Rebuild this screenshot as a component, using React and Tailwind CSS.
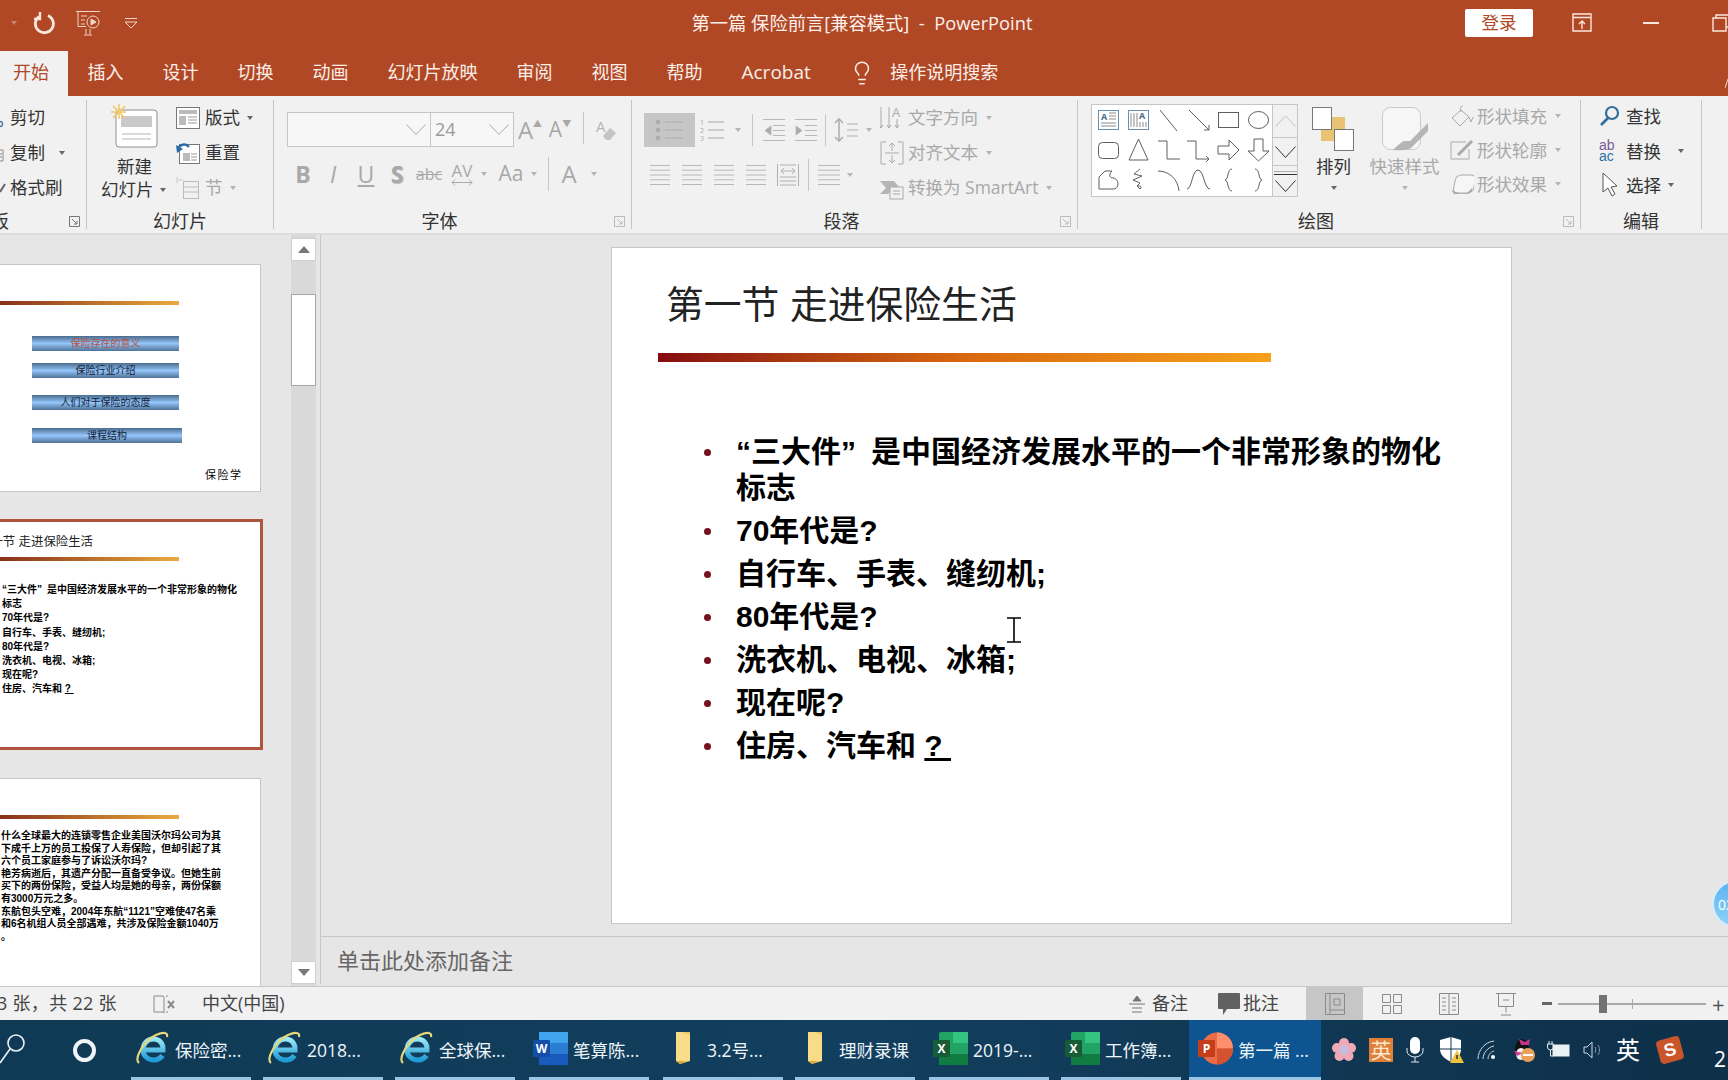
import { Lightbulb } from 'lucide-react';

const CJK = "font-['Open_Sans','Noto_Sans_CJK_SC',sans-serif]";
const SLIDE = "font-['Liberation_Sans','Noto_Sans_CJK_SC',sans-serif]";

const Drop = ({ claro = false, className = '' }) => (
	<span
		className={`inline-block w-0 h-0 border-x-[3.5px] border-x-transparent border-t-[4px] ${claro ? 'border-t-[#b5b5b5]' : 'border-t-[#666]'} ${className}`}
	/>
);

const Sep = ({ className = '' }) => <span className={`w-px bg-[#c6c6c6] shrink-0 ${className}`} />;

const Launcher = ({ claro = false }) => (
	<svg width="11" height="11" viewBox="0 0 11 11" fill="none" stroke={claro ? '#bbb' : '#777'}>
		<path d="M.5 10.5V.5h10v10z" />
		<path d="M3 3l5 5M8 5v3H5" />
	</svg>
);

function Grupo({ titulo, izquierda, lanzador, claro, className = '', children }) {
	return (
		<div className={`flex flex-col shrink-0 my-[4px] border-r border-[#c6c6c6] ${className}`}>
			<div className="h-[110px] shrink-0 flex">{children}</div>
			<div className="h-[22px] shrink-0 grid grid-cols-[1fr_auto_1fr] items-center text-[18px] text-[#333] leading-none">
				<span>{izquierda}</span>
				<span className={lanzador ? '-translate-x-[13px]' : ''}>{titulo}</span>
				<span className="flex justify-end pr-[6px]">{lanzador && <Launcher claro={claro} />}</span>
			</div>
		</div>
	);
}

const Celda = ({ className = '', children }) => (
	<span className={`flex items-center justify-center shrink-0 ${className}`}>{children}</span>
);

const Lineas = ({ filas = 4, ancho = 20, alto = 20, x1 = 0, color = '#b8b8b8' }) => (
	<svg width={ancho} height={alto} fill="none" stroke={color}>
		{Array.from({ length: filas }).map((_, i) => {
			const y = 1.5 + (i * (alto - 3)) / (filas - 1);
			return <path key={i} d={`M${x1} ${y}H${ancho}`} />;
		})}
	</svg>
);

const Chevron = ({ color = '#aaa', w = 20, h = 11, sw = 1 }) => (
	<svg width={w} height={h} viewBox={`0 0 ${w} ${h}`} fill="none" stroke={color} strokeWidth={sw}>
		<path d={`M.5 .5L${w / 2} ${h - 0.5}L${w - 0.5} .5`} />
	</svg>
);

// la comilla de cierre ocupa un caracter completo en la diapositiva
const Cierra = () => <span className="inline-block w-[1em] text-left">”</span>;

function Formas() {
	const s = '#5f5f5f';
	const items = [
		<>
			<rect x="2.5" y="3.5" width="20" height="19" fill="#fff" stroke="#6b8eae" />
			<text x="5" y="13" fontSize="9" fontWeight="700" fill="#44688a">A</text>
			<path d="M13 6h7M13 9h7M13 12h7M5 16h15M5 19h15" stroke="#8a8a8a" />
		</>,
		<>
			<rect x="2.5" y="3.5" width="20" height="19" fill="#fff" stroke="#6b8eae" />
			<text x="13" y="12" fontSize="9" fontWeight="700" fill="#44688a">A</text>
			<path d="M5 6v14M8 6v14M11 6v14M14 15v5M17 15v5M20 15v5" stroke="#8a8a8a" />
		</>,
		<path d="M4 3l17 21" stroke={s} />,
		<path d="M3 3l20 20M23 23v-5M23 23h-5" stroke={s} />,
		<rect x="2.5" y="5.5" width="20" height="15" stroke={s} />,
		<ellipse cx="12.5" cy="13" rx="10" ry="8.5" stroke={s} />,
		<rect x="2.5" y="5.5" width="20" height="16" rx="4" stroke={s} />,
		<path d="M12.5 2L3 23h19z" stroke={s} />,
		<path d="M2 4h9v18h13" stroke={s} />,
		<path d="M1 4h9v18h13M23 22l-3-3M23 22l-3 3" stroke={s} />,
		<path d="M2 9h11V3l10 10-10 10v-6H2z" stroke={s} />,
		<path d="M8 2h9v12h6L12.5 24 2 14h6z" stroke={s} />,
		<path d="M3 22V10l6-6h7c-4 4-2 7 1 7s5 3 5 6-2 5-5 5z" stroke={s} />,
		<path d="M14 2l-6 5 8 2-9 4 7 3-3 3 3 3c2-1 1-4-2-3" stroke={s} />,
		<path d="M2 4c11 0 20 8 21 20" stroke={s} />,
		<path d="M1 22C6 22 6 3 12 3s6 19 12 19" stroke={s} />,
		<path d="M16 2c-5 0-3 10-7 11 4 1 2 11 7 11" stroke={s} />,
		<path d="M9 2c5 0 3 10 7 11-4 1-2 11-7 11" stroke={s} />,
	];
	return (
		<div className="grid grid-cols-[repeat(6,30px)] grid-rows-[repeat(3,30px)] w-[182px] h-[93px] bg-white border border-[#c6c6c6] px-px">
			{items.map((x, i) => (
				<Celda key={i}>
					<svg width="25" height="26" viewBox="0 0 25 26" fill="none">
						{x}
					</svg>
				</Celda>
			))}
		</div>
	);
}

function Cinta() {
	const gris = 'text-[#a8a8a8]';
	return (
		<div className="h-[139px] bg-[#f1f1f1] flex border-b-2 border-[#dcdcdc] shrink-0 text-[#333]">
			{/* Portapapeles: los iconos quedan cortados por el borde de la ventana */}
			<Grupo
				titulo=""
				izquierda={<span className="block -ml-[9px]">板</span>}
				lanzador
				className="w-[87px] overflow-x-clip"
			>
				<div className="flex flex-col w-full text-[17.5px]">
					<div className="h-[35px] flex items-center">
						<svg width="10" height="20" fill="none" stroke="#4d7ea8" strokeWidth="1.4">
							<circle cx="0" cy="16" r="2.5" />
						</svg>
						剪切
					</div>
					<div className="h-[35px] flex items-center">
						<svg width="10" height="20" fill="none" stroke="#8a8a8a">
							<path d="M0 7h3v11H0M0 11h2M0 14h2" />
						</svg>
						复制 <Drop className="ml-[14px]" />
					</div>
					<div className="h-[35px] flex items-center">
						<svg width="10" height="20" fill="none" stroke="#666" strokeWidth="2">
							<path d="M0 14L5 6" />
						</svg>
						格式刷
					</div>
				</div>
			</Grupo>

			{/* Diapositivas */}
			<Grupo titulo="幻灯片" className="w-[187px]">
				<div className="w-[89px] shrink-0 flex flex-col text-[17.5px] leading-[23px]">
					<svg className="ml-[24px] mt-[4px] mb-[7px]" width="48" height="44" viewBox="0 0 48 44" fill="none">
						<rect x="5" y="6" width="41" height="37" rx="3" fill="#fff" stroke="#8d8d8d" />
						<rect x="10" y="12" width="31" height="11" fill="#c9c9c9" />
						<path d="M11 30h29M11 35h29" stroke="#b5b5b5" />
						<path d="M8 0v15M0 8h15M2 2l12 12M14 2L2 14" stroke="#f0c866" strokeWidth="1.6" />
					</svg>
					<span className="ml-[30px]">新建</span>
					<span className="ml-[14px] flex items-center">
						幻灯片 <Drop className="ml-[6px]" />
					</span>
				</div>
				<div className="flex flex-col text-[17.5px]">
					<div className="h-[35px] flex items-center gap-[5px]">
						<svg width="24" height="24" viewBox="0 0 24 24" fill="#fff" stroke="#777">
							<rect x=".5" y="1.5" width="23" height="21" />
							<rect x="3" y="4" width="18" height="4" fill="#bbb" stroke="none" />
							<rect x="3" y="10" width="7" height="9" fill="#bbb" stroke="none" />
							<path d="M12 11h9M12 14h9M12 17h9" stroke="#999" />
						</svg>
						版式 <Drop className="ml-[2px]" />
					</div>
					<div className="h-[35px] flex items-center gap-[5px]">
						<svg width="24" height="24" viewBox="0 0 24 24" fill="#fff" stroke="#777">
							<rect x="3.5" y="3.5" width="20" height="19" />
							<rect x="7" y="12" width="7" height="8" fill="#bbb" stroke="none" />
							<path d="M15 13h6M15 16h6M15 19h6" stroke="#999" />
							<path d="M2 9c1-6 8-7 11-3" fill="none" stroke="#2b6ca8" strokeWidth="2.4" />
							<path d="M0 4l1 8 6-4z" fill="#2b6ca8" stroke="none" />
						</svg>
						重置
					</div>
					<div className={`h-[35px] flex items-center gap-[5px] ${gris}`}>
						<svg width="24" height="24" viewBox="0 0 24 24" fill="none" stroke="#bcbcbc">
							<rect x="7.5" y="5.5" width="15" height="17" />
							<path d="M7 11h16M7 16h16" />
							<path d="M1 1v6M1 4h6" stroke="#ddd" strokeWidth="2" />
						</svg>
						节 <Drop claro className="ml-[2px]" />
					</div>
				</div>
			</Grupo>

			{/* Fuente */}
			<Grupo titulo="字体" lanzador claro className="w-[358px]">
				<div className="flex flex-col pl-[13px]">
					<div className="flex mt-[12px] h-[35px]">
						<div className="w-[144px] bg-[#f7f7f7] border border-[#c6c6c6] flex items-center justify-end pr-[4px]">
							<Chevron />
						</div>
						<div className="w-[83px] bg-[#f7f7f7] border border-[#c6c6c6] border-l-0 flex items-center justify-between pl-[4px] pr-[4px] text-[18px] text-[#9a9a9a]">
							24 <Chevron />
						</div>
						<Celda className={`w-[32px] text-[24px] ${gris}`}>
							A<span className="text-[9px] -mt-[12px]">▲</span>
						</Celda>
						<Celda className={`w-[28px] text-[21px] ${gris}`}>
							A<span className="text-[9px] -mt-[12px]">▼</span>
						</Celda>
						<Sep className="ml-[9px] h-[32px]" />
						<Celda className="w-[44px]">
							<svg width="22" height="24" viewBox="0 0 22 24" fill="none">
								<text x="1" y="14" fontSize="15" fill="#b5b5b5">A</text>
								<path d="M8 18l7-8 6 5-6 7h-4z" fill="#c4c4c4" />
							</svg>
						</Celda>
					</div>
					<div className={`flex items-center mt-[9px] h-[36px] ${gris}`}>
						<Celda className="w-[32px] text-[23px] font-bold">B</Celda>
						<Celda className="w-[28px] text-[23px] italic">I</Celda>
						<Celda className="w-[38px] text-[23px] underline">U</Celda>
						<Celda className="w-[24px] text-[23px] font-bold [text-shadow:1px_1px_1px_#bbb]">S</Celda>
						<Celda className="w-[40px] text-[16px] line-through">abc</Celda>
						<Celda className="w-[26px] flex-col text-[17px] leading-[16px]">
							AV
							<svg width="22" height="7" fill="none" stroke="#a8a8a8">
								<path d="M1 3.5h20M1 3.500l3-3M1 3.500l3 3M21 3.500l-3-3M21 3.500l-3 3" />
							</svg>
						</Celda>
						<Celda className="w-[18px]">
							<Drop claro />
						</Celda>
						<Celda className="w-[36px] text-[21px]">Aa</Celda>
						<Celda className="w-[10px]">
							<Drop claro />
						</Celda>
						<Sep className="ml-[9px] h-[34px]" />
						<Celda className="w-[24px] ml-[8px] text-[24px]">A</Celda>
						<Celda className="w-[26px]">
							<Drop claro />
						</Celda>
					</div>
				</div>
			</Grupo>

			{/* Parrafo */}
			<Grupo titulo="段落" lanzador claro className="w-[446px]">
				<div className="w-[248px] shrink-0 flex flex-col pl-[12px]">
					<div className="flex items-center mt-[13px] h-[34px]">
						<div className="w-[51px] h-[34px] bg-[#c6c6c6] flex items-center justify-center">
							<svg width="30" height="24" fill="#adadad" stroke="#adadad">
								<circle cx="3" cy="4" r="2" />
								<circle cx="3" cy="12" r="2" />
								<circle cx="3" cy="20" r="2" />
								<path d="M10 4h18M10 12h18M10 20h18" />
							</svg>
						</div>
						<svg className="ml-[5px]" width="24" height="24" fill="none" stroke="#aaa">
							<text x="0" y="7" fontSize="7" fill="#aaa" stroke="none">1</text>
							<text x="0" y="15" fontSize="7" fill="#aaa" stroke="none">2</text>
							<text x="0" y="23" fontSize="7" fill="#aaa" stroke="none">3</text>
							<path d="M8 4h16M8 12h16M8 20h16" />
						</svg>
						<Celda className="w-[28px]">
							<Drop claro />
						</Celda>
						<Sep className="h-[32px]" />
						<svg className="ml-[9px]" width="23" height="24" fill="none" stroke="#b8b8b8">
							<path d="M1 1.5h22M11 7.5h12M11 12.5h12M11 17.5h12M1 22.5h22" />
							<path d="M9 8l-6 4.5 6 4.5z" fill="#aaa" />
						</svg>
						<svg className="ml-[9px]" width="23" height="24" fill="none" stroke="#b8b8b8">
							<path d="M1 1.5h22M11 7.5h12M11 12.5h12M11 17.5h12M1 22.5h22" />
							<path d="M2 8l6 4.5-6 4.5z" fill="#aaa" />
						</svg>
						<Sep className="ml-[8px] h-[32px]" />
						<svg className="ml-[8px]" width="24" height="26" fill="none" stroke="#b0b0b0">
							<path d="M5 2v22M1 6l4-4 4 4M1 20l4 4 4-4" strokeWidth="1.6" />
							<path d="M13 7h11M13 13h11M13 19h11" />
						</svg>
						<Celda className="w-[22px]">
							<Drop claro />
						</Celda>
					</div>
					<div className="flex items-center mt-[16px] h-[24px]">
						<span className="ml-[6px]"><Lineas filas={5} ancho={20} alto={22} /></span>
						<span className="ml-[12px]"><Lineas filas={5} ancho={20} alto={22} /></span>
						<span className="ml-[12px]"><Lineas filas={5} ancho={20} alto={22} /></span>
						<span className="ml-[12px]"><Lineas filas={5} ancho={20} alto={22} /></span>
						<svg className="ml-[11px]" width="22" height="24" fill="none" stroke="#b0b0b0">
							<path d="M.5 1v22M21.5 1v22M3 2h16M3 14h16M3 18h16M3 22h16M4 8h14M4 8l3-3M4 8l3 3M18 8l-3-3M18 8l-3 3" />
						</svg>
						<Sep className="ml-[9px] h-[32px]" />
						<span className="ml-[9px]"><Lineas filas={5} ancho={22} alto={22} /></span>
						<Celda className="w-[20px]">
							<Drop claro />
						</Celda>
					</div>
				</div>
				<div className={`flex flex-col text-[17.5px] ${gris}`}>
					<div className="h-[35px] flex items-center gap-[4px]">
						<svg width="24" height="24" fill="none" stroke="#aaa">
							<path d="M1 1v21M9 1v21M-1 19l2 3 2-3M7 19l2 3 2-3M17 13v9M15 19l2 3 2-3" />
							<text x="12" y="11" fontSize="13" fill="#aaa" stroke="none">A</text>
						</svg>
						文字方向 <Drop claro className="ml-[4px]" />
					</div>
					<div className="h-[35px] flex items-center gap-[4px]">
						<svg width="24" height="24" fill="none" stroke="#aaa">
							<path d="M6 1H1v22h5M18 1h5v22h-5M12 2v8M9 5l3-3 3 3M12 22v-8M9 19l3 3 3-3M5 12h14" />
						</svg>
						对齐文本 <Drop claro className="ml-[4px]" />
					</div>
					<div className="h-[35px] flex items-center gap-[4px]">
						<svg width="24" height="24" fill="none">
							<path d="M0 5h14l6 7-6 0-6 6-8 0 6-6z" fill="#b5b5b5" />
							<rect x="10" y="11" width="13" height="12" fill="#f1f1f1" stroke="#aaa" />
							<path d="M13 15h7M13 18h7" stroke="#aaa" />
						</svg>
						转换为 SmartArt <Drop claro className="ml-[4px]" />
					</div>
				</div>
			</Grupo>

			{/* Dibujo */}
			<Grupo titulo="绘图" lanzador claro className="w-[503px]">
				<div className="flex mt-[4px] ml-[13px] h-[93px] shrink-0">
					<Formas />
					<div className="w-[25px] flex flex-col border border-l-0 border-[#c6c6c6] bg-[#f1f1f1]">
						<Celda className="h-[32px]"><svg width="21" height="12" fill="none" stroke="#c2c2c2"><path d="M.5 11.5L10.5 1l10 10.5" /></svg></Celda>
						<Celda className="h-[29px] border-y border-[#c6c6c6]"><Chevron color="#333" w={21} h={12} /></Celda>
						<Celda className="flex-1 flex-col gap-[2px]">
							<span className="w-[23px] h-px bg-[#aaa]" />
							<span className="w-[23px] h-px bg-[#333] mb-[3px]" />
							<Chevron color="#333" w={21} h={12} />
						</Celda>
					</div>
				</div>
				<div className="w-[63px] shrink-0 ml-[4px] flex flex-col items-center text-[17.5px] leading-[24px]">
					<svg className="mt-[7px] mb-[3px]" width="44" height="44" fill="#fff" stroke="#777">
						<rect x="9" y="10" width="24" height="24" fill="#e8c374" stroke="none" />
						<rect x=".5" y=".5" width="19" height="22" />
						<rect x="22.5" y="22.5" width="19" height="21" />
					</svg>
					<span>排列</span>
					<Drop className="mt-[8px]" />
				</div>
				<div className={`w-[79px] shrink-0 flex flex-col items-center text-[17.5px] leading-[24px] ${gris}`}>
					<svg className="mt-[7px] mb-[3px]" width="46" height="44" fill="none">
						<rect x=".5" y=".5" width="38" height="42" rx="8" fill="#f6f6f6" stroke="#c9c9c9" />
						<path d="M46 16L28 34l-6 0c-4 2-8 6-11 9 8 1 18 0 21-5l14-14z" fill="#b5b5b5" />
					</svg>
					<span>快速样式</span>
					<Drop claro className="mt-[8px]" />
				</div>
				<div className={`flex flex-col text-[17.5px] ml-[6px] -mt-px ${gris}`}>
					<div className="h-[34px] flex items-center gap-[3px]">
						<svg width="24" height="24" fill="none" stroke="#aaa">
							<path d="M11 6l-9 8 8 8 9-9zM13 2c-3 0-3 3-2 6M19 13l2 5 2-5" />
						</svg>
						形状填充 <Drop claro className="ml-[5px]" />
					</div>
					<div className="h-[34px] flex items-center gap-[3px]">
						<svg width="24" height="24" fill="none" stroke="#aaa">
							<path d="M16 4H1v17h18V11" />
							<path d="M8 17l14-14" strokeWidth="3" />
						</svg>
						形状轮廓 <Drop claro className="ml-[5px]" />
					</div>
					<div className="h-[34px] flex items-center gap-[3px]">
						<svg width="24" height="24" fill="none">
							<rect x="3" y="3" width="20" height="18" rx="5" fill="#f6f6f6" stroke="#aaa" transform="skewX(-12) translate(4 0)" />
							<path d="M1 18c4 3 12 4 16 3l5-5v3l-4 3H4z" fill="#aaa" />
						</svg>
						形状效果 <Drop claro className="ml-[5px]" />
					</div>
				</div>
			</Grupo>

			{/* Edicion */}
			<Grupo titulo="编辑" className="w-[121px]">
				<div className="flex flex-col text-[17.5px] pl-[18px] -mt-px">
					<div className="h-[34.500px] flex items-center gap-[5px]">
						<svg width="22" height="22" fill="none">
							<circle cx="13" cy="8" r="6" stroke="#2f6f9f" strokeWidth="2.2" />
							<path d="M9 13l-7 7" stroke="#2f6f9f" strokeWidth="2.6" />
						</svg>
						查找
					</div>
					<div className="h-[34.500px] flex items-center gap-[3px]">
						<span className="w-[24px] text-[14px] leading-[11px] text-[#7a5a94] font-['Liberation_Sans',sans-serif]">
							ab
							<br />
							<span className="text-[#2f6f9f]">ac</span>
						</span>
						替换 <Drop className="ml-[14px]" />
					</div>
					<div className="h-[34.500px] flex items-center gap-[5px]">
						<svg width="22" height="26" fill="#fff" stroke="#555">
							<path d="M4 1v19l5-4 4 8 3-2-4-7 6-1z" />
						</svg>
						选择 <Drop className="ml-[2px]" />
					</div>
				</div>
			</Grupo>
		</div>
	);
}

const BarraAzul = ({ ancho = 'w-[147px]', rojo = false, className = '', children }) => (
	<div
		className={`h-[15px] ${ancho} bg-gradient-to-b from-[#4a6c8e] via-[#95c6fb] to-[#4f7396] flex items-center justify-center text-[10px] ${rojo ? 'text-[#b5533c]' : 'text-[#15233a]'} ${className}`}
	>
		{children}
	</div>
);

const LineaMini = ({ className = '' }) => (
	<div className={`h-[4px] w-[206px] bg-gradient-to-r from-[#7a1a14] to-[#e9ab3e] ${className}`} />
);

function PanelMiniaturas() {
	return (
		<div className={`w-[291px] shrink-0 overflow-hidden pt-[29px] ${SLIDE}`}>
			<div className="-ml-[43px] w-[304px] h-[228px] bg-white border border-[#c6c6c6] flex flex-col">
				<LineaMini className="ml-[15px] mt-[36px]" />
				<BarraAzul rojo className="ml-[74px] mt-[31px]">保险存在的意义</BarraAzul>
				<BarraAzul className="ml-[74px] mt-[12px]">保险行业介绍</BarraAzul>
				<BarraAzul className="ml-[74px] mt-[17px]">人们对于保险的态度</BarraAzul>
				<BarraAzul ancho="w-[150px]" className="ml-[74px] mt-[18px]">课程结构</BarraAzul>
				<div className="ml-[247px] mt-[25px] text-[11px] tracking-[1.5px] leading-[14px] text-black">保险学</div>
			</div>

			<div className="-ml-[43px] mt-[27px] w-[306px] h-[231px] bg-white border-[3px] border-[#b0553d] flex flex-col">
				<div className="ml-[18px] mt-[12px] text-[12.4px] leading-[16px] whitespace-nowrap text-[#222]">第一节 走进保险生活</div>
				<LineaMini className="ml-[13px] mt-[7px]" />
				<div className="ml-[42px] mt-[22px] text-[10px] font-bold leading-[14.2px] text-black whitespace-nowrap">
					<p>
						“三大件<Cierra />是中国经济发展水平的一个非常形象的物化
					</p>
					<p>标志</p>
					<p>70年代是?</p>
					<p>自行车、手表、缝纫机;</p>
					<p>80年代是?</p>
					<p>洗衣机、电视、冰箱;</p>
					<p>现在呢?</p>
					<p>
						住房、汽车和 <span className="underline whitespace-pre">? </span>
					</p>
				</div>
			</div>

			<div className="-ml-[43px] mt-[28px] w-[304px] h-[300px] bg-white border border-[#c6c6c6] flex flex-col">
				<LineaMini className="ml-[15px] mt-[36px]" />
				<div className="ml-[43px] mt-[11px] text-[10px] font-bold leading-[12.6px] text-black whitespace-nowrap">
					<p>什么全球最大的连锁零售企业美国沃尔玛公司为其</p>
					<p>下成千上万的员工投保了人寿保险，但却引起了其</p>
					<p>六个员工家庭参与了诉讼沃尔玛?</p>
					<p>艳芳病逝后，其遗产分配一直备受争议。但她生前</p>
					<p>买下的两份保险，受益人均是她的母亲，两份保额</p>
					<p>有3000万元之多。</p>
					<p>东航包头空难，2004年东航“1121”空难使47名乘</p>
					<p>和6名机组人员全部遇难，共涉及保险金额1040万</p>
					<p>。</p>
				</div>
			</div>
		</div>
	);
}

function BarraScroll() {
	const boton = 'h-[23px] bg-white border border-[#d0d0d0] flex items-center justify-center';
	return (
		<div className="w-[25px] shrink-0 bg-[#d9d9d9] flex flex-col pt-[3px] pb-[2px]">
			<div className={boton}>
				<span className="w-0 h-0 border-x-[6px] border-x-transparent border-b-[7px] border-b-[#777]" />
			</div>
			<div className="mt-[33px] h-[92px] bg-white border border-[#a6a6a6]" />
			<div className="flex-1" />
			<div className={boton}>
				<span className="w-0 h-0 border-x-[6px] border-x-transparent border-t-[7px] border-t-[#777]" />
			</div>
		</div>
	);
}

function Diapositiva() {
	const filas = ['70年代是?', '自行车、手表、缝纫机;', '80年代是?', '洗衣机、电视、冰箱;', '现在呢?'];
	const Punto = () => <span className="w-[7px] h-[7px] rounded-full bg-[#76121e] shrink-0 mt-[15px]" />;
	return (
		<div className={`relative ml-[290px] mt-[12px] w-[901px] h-[677px] bg-white border border-[#c6c6c6] ${SLIDE}`}>
			<h1 className="ml-[54px] mt-[32px] text-[37.800px] leading-[50px] font-normal text-[#222] whitespace-pre">第一节 走进保险生活</h1>
			<div className="ml-[46px] mt-[23px] w-[613px] h-[9px] bg-gradient-to-r from-[#86090f] via-[#d9680f] to-[#f5a11c]" />
			<ul className="ml-[92px] mt-[72px] flex flex-col gap-[7px] text-[30px] leading-[36px] font-bold text-black">
				<li className="flex gap-[25px]">
					<Punto />
					<span className="w-[720px]">
						“三大件<Cierra />是中国经济发展水平的一个非常形象的物化标志
					</span>
				</li>
				{filas.map((f) => (
					<li key={f} className="flex gap-[25px]">
						<Punto />
						<span>{f}</span>
					</li>
				))}
				<li className="flex gap-[25px]">
					<Punto />
					<span>
						住房、汽车和 <span className="underline whitespace-pre">? </span>
					</span>
				</li>
			</ul>
			{/* cursor de texto */}
			<svg className="absolute left-[394px] top-[369px]" width="16" height="26" fill="none" stroke="#000" strokeWidth="1.6">
				<path d="M1 1h14M8 1v24M1 25h14" />
			</svg>
		</div>
	);
}

function BarraEstado() {
	const ic = '#8a8a8a';
	return (
		<div className="h-[34px] shrink-0 bg-[#f1f1f1] border-t border-[#c8c8c8] flex items-center text-[18px] text-[#444] whitespace-nowrap">
			<div className="w-[1128px] shrink-0 flex items-center">
				<span className="-ml-[3px] w-[121px] tracking-[0.3px]">3 张，共 22 张</span>
				<svg className="ml-[35px]" width="22" height="20" fill="none" stroke={ic}>
					<path d="M10 2H1v16h9l1 1V3zM13 2h2M13 18h2" />
					<path d="M15 7l6 7M21 7l-6 7" strokeWidth="2" />
				</svg>
				<span className="ml-[27px]">中文(中国)</span>
			</div>
			<svg width="18" height="20" fill="none" stroke="#777">
				<path d="M1 10h16M4 14h10M4 18h10" />
				<path d="M9 2l4 5H5z" fill="#777" />
			</svg>
			<span className="ml-[6px] w-[38px]">备注</span>
			<svg className="ml-[27px]" width="24" height="24" fill="#616161">
				<path d="M2 1h20a1 1 0 011 1v14a1 1 0 01-1 1H10l-4 6v-6H2a1 1 0 01-1-1V2a1 1 0 011-1z" />
			</svg>
			<span className="ml-[2px] w-[38px]">批注</span>
			<div className="ml-[25px] w-[57px] h-full bg-[#c6c6c6] flex items-center justify-center">
				<svg width="20" height="22" fill="none" stroke={ic}>
					<path d="M.5 .5h19v21H.5zM5 .5v21M5 17h15M9 6h6v6H9z" />
				</svg>
			</div>
			<Celda className="w-[57px]">
				<svg width="20" height="20" fill="none" stroke={ic}>
					<path d="M.5 .5h8v8h-8zM11.5 .5h8v8h-8zM.5 11.5h8v8h-8zM11.5 11.5h8v8h-8z" />
				</svg>
			</Celda>
			<Celda className="w-[57px]">
				<svg width="20" height="22" fill="none" stroke={ic}>
					<path d="M.5 .5h19v21H.5zM10 .5v21M3 5h4M3 9h4M3 13h4M3 17h4M13 5h4M13 9h4M13 13h4M13 17h4" />
				</svg>
			</Celda>
			<Celda className="w-[57px]">
				<svg width="20" height="24" fill="none" stroke={ic}>
					<path d="M0 1.5h20M2.5 1.5v13h15v-13M10 14.5v6M5 23h10M7 8h6" />
				</svg>
			</Celda>
			<span className="ml-[8px] w-[10px] h-[2.500px] bg-[#666]" />
			<div className="ml-[6px] relative w-[148px] h-[2px] bg-[#aaa]">
				<span className="absolute left-[41px] -top-[8px] w-[8px] h-[18px] bg-[#737373]" />
				<span className="absolute left-[74px] -top-[4px] w-px h-[10px] bg-[#aaa]" />
			</div>
			<span className="ml-[6px] text-[22px] leading-none text-[#555]">+</span>
		</div>
	);
}

const IconoIE = () => (
	<svg width="35" height="35" viewBox="0 0 35 35" fill="none">
		<defs>
			<linearGradient id="ie" x1="0" y1="0" x2="0" y2="1">
				<stop offset="0" stopColor="#9be8f7" />
				<stop offset="1" stopColor="#1f9bd6" />
			</linearGradient>
		</defs>
		<path d="M10 19h18c.5-7-4-11-9.500-11C12 8 8 13 8 19c0 6 5 10 10.500 10 4 0 7-1.500 9-4.500" stroke="url(#ie)" strokeWidth="5" />
		<path d="M4 32C-1 28 8 10 21 4c7-3 12-3 11 2" stroke="#e6d77a" strokeWidth="2.2" />
	</svg>
);

const IconoWord = () => (
	<svg width="35" height="35" viewBox="0 0 35 35">
		<rect x="6" y="1" width="29" height="33" rx="2" fill="#2b7cd3" />
		<rect x="6" y="1" width="29" height="11" fill="#41a5ee" />
		<rect x="6" y="23" width="29" height="11" fill="#185abd" />
		<rect x="0" y="9" width="17" height="17" rx="1" fill="#144ea8" />
		<text x="8.500" y="22" fontSize="12" fontWeight="700" fill="#fff" textAnchor="middle">W</text>
	</svg>
);

const IconoCarpeta = () => (
	<svg width="35" height="35" viewBox="0 0 35 35">
		<path d="M9 1h14v29l-10 3-4-3z" fill="#eec65f" />
		<path d="M9 1h6l8 3v26H9z" fill="#f8dc8a" />
		<path d="M13 33l-4-3h9z" fill="#d9a93b" />
	</svg>
);

const IconoExcel = () => (
	<svg width="35" height="35" viewBox="0 0 35 35">
		<rect x="6" y="1" width="29" height="33" rx="2" fill="#21a366" />
		<rect x="20" y="1" width="15" height="11" fill="#33c481" />
		<rect x="6" y="23" width="29" height="11" fill="#107c41" />
		<rect x="0" y="9" width="17" height="17" rx="1" fill="#185c37" />
		<text x="8.500" y="22" fontSize="12" fontWeight="700" fill="#fff" textAnchor="middle">X</text>
	</svg>
);

const IconoPPT = () => (
	<svg width="35" height="35" viewBox="0 0 35 35">
		<circle cx="19" cy="17.500" r="16" fill="#ed6c47" />
		<path d="M19 1.500a16 16 0 0116 16H19z" fill="#ff8f6b" />
		<path d="M19 17.500h16a16 16 0 01-16 16z" fill="#d35230" />
		<rect x="0" y="9" width="17" height="17" rx="1" fill="#c43e1c" />
		<text x="8.500" y="22" fontSize="12" fontWeight="700" fill="#fff" textAnchor="middle">P</text>
	</svg>
);

function ItemTarea({ Icono, texto, className = 'w-[120px]', activo = false }) {
	return (
		<div className={`shrink-0 h-full flex flex-col ${activo ? 'bg-[#0d5490]' : ''} ${className}`}>
			<div className={`flex-1 flex items-center gap-[5px] ${activo ? 'pl-[9px]' : 'pl-[4px]'} -mb-[3px]`}>
				<Icono />
				<span className="text-[17.5px] text-[#eef5fa] whitespace-nowrap pt-[3px]">{texto}</span>
			</div>
			<div className="h-[3px] mt-[3px] bg-[#9cc5e3]" />
		</div>
	);
}

function Bandeja() {
	return (
		<div className="flex items-center h-full shrink-0 overflow-hidden text-white">
			<svg className="ml-[11px]" width="24" height="24" viewBox="0 0 24 24">
				<circle cx="12" cy="5" r="5" fill="#f0a8b5" />
				<circle cx="5" cy="10" r="5" fill="#f0a8b5" />
				<circle cx="19" cy="10" r="5" fill="#f0a8b5" />
				<circle cx="7.500" cy="18" r="5" fill="#f0a8b5" />
				<circle cx="16.500" cy="18" r="5" fill="#f0a8b5" />
				<circle cx="12" cy="12" r="5" fill="#c6bde0" />
			</svg>
			<span className="ml-[13px] w-[24px] h-[24px] bg-[#e07f38] flex items-center justify-center text-[21px] leading-none text-[#fbe7d2]">英</span>
			<svg className="ml-[13px]" width="18" height="26" viewBox="0 0 18 26" fill="none">
				<rect x="4" y="0" width="10" height="17" rx="5" fill="#fff" />
				<path d="M1 11v3a8 6 0 0016 0v-3M9 20v5M5 25h8" stroke="#dfe8ee" />
			</svg>
			<svg className="ml-[16px]" width="24" height="26" viewBox="0 0 24 26">
				<path d="M11 0l10 3v9c0 6-4 10-10 13C5 22 0 18 0 12V3z" fill="#fff" />
				<path d="M11 0v25M0 12h21" stroke="#10384f" />
				<path d="M17 13l7 13H10z" fill="#f0c33c" />
				<path d="M17 18v4" stroke="#333" strokeWidth="1.5" />
			</svg>
			<svg className="ml-[13px]" width="20" height="20" viewBox="0 0 20 20" fill="none" stroke="#c9d9e4">
				<path d="M1 19C1 10 8 2 17 1M6 19c0-6 5-12 11-13M11 19c0-3 2-7 6-8" />
				<circle cx="16" cy="17" r="2" fill="#fff" stroke="none" />
			</svg>
			<svg className="ml-[16px]" width="22" height="26" viewBox="0 0 22 26">
				<ellipse cx="9" cy="12" rx="7" ry="10" fill="#111" />
				<ellipse cx="8" cy="17" rx="5" ry="6" fill="#f4f0e8" />
				<path d="M6 2l6 3 5-3-1 6-8 0z" fill="#c2358a" />
				<path d="M1 14l9 2-6 3z" fill="#d43a9a" />
				<circle cx="15" cy="18" r="7" fill="#e9a15a" />
				<path d="M10 18h10" stroke="#fff" strokeWidth="2" />
			</svg>
			<svg className="ml-[11px]" width="24" height="20" viewBox="0 0 24 20" fill="none" stroke="#eaf1f5">
				<rect x="7" y="5" width="16" height="11" fill="#eaf1f5" />
				<path d="M3 1v3M6 1v3M1.500 4h6v3a3 3 0 01-6 0zM4.500 10v6H7" />
			</svg>
			<svg className="ml-[13px]" width="22" height="20" viewBox="0 0 22 20" fill="none" stroke="#c9d9e4">
				<path d="M1 7h3l5-5v16l-5-5H1z" />
				<path d="M12 7c1 2 1 4 0 6M15 5c2 3 2 7 0 10" stroke="#7f9cb0" />
			</svg>
			<span className="ml-[11px] text-[24px] leading-none">英</span>
			<span className="ml-[18px] w-[24px] h-[24px] rounded-[4px] bg-[#c9552a] rotate-[-15deg] flex items-center justify-center text-[18px] font-black leading-none text-white font-['Liberation_Sans',sans-serif]">
				S
			</span>
			<span className="ml-[32px] mt-[18px] text-[21px] leading-none font-['Open_Sans',sans-serif]">2</span>
		</div>
	);
}

function BarraTareas() {
	return (
		<div className="h-[60px] shrink-0 bg-gradient-to-r from-[#0f3a55] via-[#123f5e] to-[#0e3049] flex">
			<div className="w-[131px] shrink-0 flex items-center">
				<svg width="26" height="32" fill="none" stroke="#eaf1f5" strokeWidth="1.6" className="-mt-[2px]">
					<circle cx="16" cy="10" r="8" />
					<path d="M10 16L0 30" />
				</svg>
				<span className="ml-[47px] w-[23px] h-[23px] rounded-full border-[4px] border-[#eef4f8]" />
			</div>
			<ItemTarea Icono={IconoIE} texto="保险密..." />
			<ItemTarea Icono={IconoIE} texto="2018..." className="w-[120px] ml-[12px]" />
			<ItemTarea Icono={IconoIE} texto="全球保..." className="w-[120px] ml-[12px]" />
			<ItemTarea Icono={IconoWord} texto="笔算陈..." className="w-[120px] ml-[14px]" />
			<ItemTarea Icono={IconoCarpeta} texto="3.2号..." className="w-[120px] ml-[14px]" />
			<ItemTarea Icono={IconoCarpeta} texto="理财录课" className="w-[120px] ml-[12px]" />
			<ItemTarea Icono={IconoExcel} texto="2019-..." className="w-[120px] ml-[14px]" />
			<ItemTarea Icono={IconoExcel} texto="工作簿..." className="w-[120px] ml-[12px]" />
			<ItemTarea Icono={IconoPPT} texto="第一篇 ..." className="w-[132px] ml-[8px]" activo />
			<Bandeja />
		</div>
	);
}

export default function App() {
	const pestanas = ['插入', '设计', '切换', '动画', '幻灯片放映', '审阅', '视图', '帮助'];
	return (
		<div className={`relative w-[1728px] h-[1080px] overflow-hidden flex flex-col bg-[#e6e6e6] ${CJK}`}>
			{/* Barra de titulo */}
			<div className="h-[51px] shrink-0 bg-[#b04825] grid grid-cols-[1fr_auto_1fr] items-center text-white pb-[6px]">
				<div className="flex items-center pl-[11px]">
					<span className="w-0 h-0 border-x-[3.5px] border-x-transparent border-t-[4px] border-t-[#c9836c]" />
					<svg className="ml-[16px]" width="22" height="24" viewBox="0 0 22 24" fill="none" stroke="#fbe6dd" strokeWidth="2.8">
						<path d="M15 4.500A9 9 0 116 5.500" />
						<path d="M7 1v7H1" strokeWidth="2.4" />
					</svg>
					<svg className="ml-[21px]" width="26" height="26" viewBox="0 0 26 26" fill="none" stroke="#f4d5c8">
						<path d="M0 1.500h24M2 1.500v15h8M5 6h6M5 10h4M5 14h4M8 25h8M10 19v5M14 19v5" />
						<circle cx="17" cy="12" r="6" />
						<path d="M15 9l5 3-5 3z" fill="#f4d5c8" />
					</svg>
					<svg className="ml-[22px]" width="14" height="12" viewBox="0 0 14 12" fill="none" stroke="#f4d5c8">
						<path d="M1 1.500h12M1 5l6 6 6-6z" />
					</svg>
				</div>
				<div className="text-[18.3px] text-[#fdf1ec] whitespace-pre -translate-x-[2px]">第一篇 保险前言[兼容模式]  -  PowerPoint</div>
				<div className="flex items-center justify-end -mr-[2px]">
					<button className="w-[68px] h-[28px] mr-[39px] bg-white rounded-[2px] text-[17.5px] leading-none text-[#b04825]">登录</button>
					<svg width="20" height="20" viewBox="0 0 20 20" fill="none" stroke="#fbe6dd" strokeWidth="1.4">
						<path d="M1 1h18v17H1zM1 4.500h18" />
						<path d="M10 16V8M7 11l3-3 3 3" />
					</svg>
					<span className="ml-[51px] w-[16px] h-[2px] bg-[#fbe6dd]" />
					<svg className="ml-[53px]" width="18" height="18" viewBox="0 0 18 18" fill="none" stroke="#fbe6dd" strokeWidth="1.4">
						<path d="M4 4V1h13v12h-3M1 4h13v13H1z" />
					</svg>
				</div>
			</div>

			{/* Pestanas */}
			<div className="h-[45px] shrink-0 bg-[#b04825] flex items-stretch text-[18px] text-[#fbeee8] whitespace-nowrap">
				<div className="w-[68px] bg-[#f1f1f1] text-[#b04825] flex items-center pl-[13px] pb-[2px]">开始</div>
				{pestanas.map((p) => (
					<div key={p} className="px-[19.5px] flex items-center pb-[2px]">
						{p}
					</div>
				))}
				<div className="px-[19.5px] flex items-center pb-[2px] text-[19px]">Acrobat</div>
				<div className="ml-[19px] flex items-center gap-[15px] pb-[2px]">
					<Lightbulb size={26} strokeWidth={1.4} />
					操作说明搜索
				</div>
				<svg className="ml-auto mt-[28px]" width="3" height="9" fill="none" stroke="#f4d5c8">
					<path d="M0 9L3 0" />
				</svg>
			</div>

			<Cinta />

			{/* Zona central */}
			<div className="flex-1 flex min-h-0">
				<PanelMiniaturas />
				<BarraScroll />
				<div className="w-[4px] shrink-0" />
				<div className="flex-1 flex flex-col border-l border-[#c8c8c8] mb-[2px]">
					<div className="flex-1 min-h-0">
						<Diapositiva />
					</div>
					<div className="h-[48px] shrink-0 border-t border-[#c6c6c6] flex items-center pl-[16px] text-[22px] text-[#666]">
						单击此处添加备注
					</div>
				</div>
			</div>

			<BarraEstado />
			<BarraTareas />

			{/* Reloj flotante de la grabacion */}
			<div className="absolute left-[1712px] top-[880px] w-[48px] h-[48px] rounded-full border-2 border-[#d6ecfb] bg-gradient-to-b from-[#5cb3f0] to-[#8fd3f8] flex items-center pl-[4px] text-[14px] text-white">
				02
			</div>
		</div>
	);
}
